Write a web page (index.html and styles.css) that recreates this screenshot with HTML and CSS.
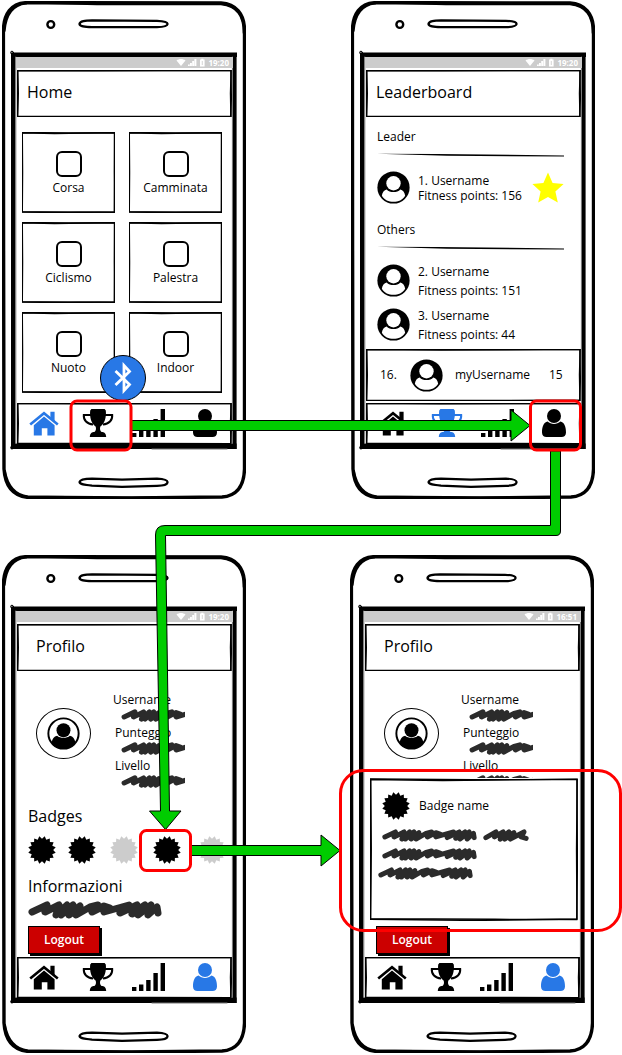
FILE: index.html
```html
<!DOCTYPE html>
<html lang="it">
<head>
<meta charset="utf-8">
<meta name="viewport" content="width=device-width, initial-scale=1">
<title>Fitness app wireflow</title>
<link rel="stylesheet" href="styles.css">
</head>
<body>
<svg class="defs" aria-hidden="true">
  <symbol id="frame" viewBox="0 0 100 100" preserveAspectRatio="none">
    <g fill="none" stroke="#000" stroke-width="1.4">
      <path vector-effect="non-scaling-stroke" d="M.3 .6 L50 1.2 L99.6 1 L99.3 50 L99.5 98.6 L50 99.6 L.3 98.8 L.6 50 Z"/>
      <path vector-effect="non-scaling-stroke" d="M.3 1 L35 1.8 L99.5 .8 L99.7 60 L99.4 99 L60 98.8 L.2 98.4 L.3 40 Z"/>
    </g>
  </symbol>
  <symbol id="phone" viewBox="0 0 244 498">
    <g fill="none" stroke="#000" stroke-linecap="round" stroke-linejoin="round">
      <path fill="#fff" stroke-width="3.4" d="M1.4 30 C1.6 13 9 2 25 1.6 L219 2 C234 3 242.4 13 242.5 29 L242.5 250 L242.5 468 C242 485 235 495 220 496 L130 496.9 L25 496.3 C11 495 3 485 2 468 L1.6 250 Z"/>
      <path stroke-width="2.6" d="M25 1.3 L95 3 L219 3 C236 5 242 15 242 32"/>
      <path stroke-width="2" d="M2.6 30 C4 14 11 4 24 2.6 M3 470 C6 487 14 494 26 495.6 L120 496.8 L200 496"/>
      <circle cx="48.8" cy="23.5" r="3.4" stroke-width="2.4"/>
      <path stroke-width="2.3" d="M77.5 23 C78 20 83 19.6 90 19.4 L155 19.8 C162 20 165.500 21 165.600 23 C165.400 25 162 26 155 26.200 L90 26.200 C82 26 78 25.500 77.500 23 Z"/>
      <path stroke-width="2.2" d="M77.5 481 C78 478.4 83 477.6 90 477.6 L120 478.6 L155 477.600 C162 478 165.400 479 165.600 481 C165.400 484 162 484.600 155 484.800 L120 485.800 L90 484.600 C82 484 78 483.600 77.500 481 Z"/>
      <path stroke-width="4.4" stroke-linecap="butt" stroke-linejoin="miter" d="M9 53.8 H235 M11.2 51.5 V448"/>
      <path stroke-width="4" stroke-linecap="butt" d="M232.600 52 V448"/>
      <path stroke-width="5.4" stroke-linecap="butt" d="M9 445.200 H234.600"/>
      <path stroke="#777" stroke-width="1" d="M13.800 56 V442 M230.400 56 V442 M150 448 H225"/>
      <circle cx="10" cy="51.600" r="1.400" stroke-width="1"/>
      <circle cx="10" cy="446.600" r="1.400" stroke-width="1"/>
    </g>
  </symbol>
  <symbol id="status" viewBox="0 0 30 9">
    <g fill="#fff">
      <path d="M.5 2.6 C3 .6 7 .6 9.5 2.6 L5 8 Z"/>
      <path d="M12 8 V6.5 H13.8 V8 Z M14 8 V5 H15.9 V8 Z M16.2 8 V3 H18.1 V8 Z M18.4 8 V1 H20.4 V8 Z"/>
      <path d="M24 1.6 H25.2 V.8 H27.4 V1.6 H28.6 V8.4 H24 Z"/>
    </g>
    <path d="M26.3 3 V7" stroke="#ccc" stroke-width=".8"/>
  </symbol>
  <symbol id="home" viewBox="0 0 30 28">
    <path d="M1.2 15.6 L15 4.2 L28.8 15.6" fill="none" stroke="currentColor" stroke-width="2.6"/>
    <path fill="currentColor" d="M21.4 2.8 H25.6 V13 L21.4 9.6 Z M15 7.6 L25.600 16.200 V26.400 H18.400 V19.200 H12.800 V26.400 H4.800 V16.200 Z"/>
  </symbol>
  <symbol id="trophy" viewBox="0 0 32 28">
    <path fill="none" stroke="currentColor" stroke-width="2" d="M9 6 H1.8 C1.4 11 5 15.2 11 15.4 M23 6 H30.2 C30.6 11 27 15.2 21 15.4"/>
    <path fill="currentColor" d="M9.4 0 H22.6 L23.8 1.6 C24.6 8 22.6 15 18.4 17.6 C17.6 19.6 18 22 19.600 23 C22 23 24 24 24.200 28 H7.800 C8 24 10 23 12.400 23 C14 22 14.400 19.600 13.600 17.600 C9.400 15 7.400 8 8.200 1.600 Z"/>
  </symbol>
  <symbol id="signal" viewBox="0 0 33 28">
    <path fill="currentColor" d="M0 24 H4.4 V28 H0 Z M7 21.6 H11.4 V28 H7 Z M14.2 17 H18.6 V28 H14.2 Z M21.4 10 H25.8 V28 H21.4 Z M28.6 0 H33 V28 H28.6 Z"/>
  </symbol>
  <symbol id="user" viewBox="0 0 24 28">
    <circle cx="12" cy="7" r="7" fill="currentColor"/>
    <path fill="currentColor" d="M5.6 12.6 C9 15.8 15 15.8 18.4 12.6 C22.4 13.4 24 18 24 23.4 C24 26.6 22 28 19.6 28 H4.4 C2 28 0 26.6 0 23.4 C0 18 1.6 13.4 5.6 12.6 Z"/>
  </symbol>
  <symbol id="avatar" viewBox="-17 -17 34 34">
    <circle r="16.6"/>
    <path fill="#fff" d="M-12 8.4 C-11.600 5 -9.600 2.400 -7 2 C-4 5.600 4 5.600 7 2 C9.600 2.400 11.600 5 12 8.400 C9.400 12.600 5 14.800 0 14.800 C-5 14.800 -9.400 12.600 -12 8.400 Z"/>
    <circle cy="-4.4" r="7.4" fill="#fff"/>
  </symbol>
  <symbol id="avatar-line" viewBox="-17 -17 34 34">
    <circle r="15.6" fill="#fff" stroke="#000" stroke-width="2"/>
    <path d="M-12.2 9 C-11.6 5.4 -9.8 3 -6.6 2.2 C-3.6 5 3.6 5 6.6 2.2 C9.8 3 11.6 5.4 12.2 9 C9 13.6 5 15.6 0 15.6 C-5 15.6 -9 13.6 -12.2 9 Z"/>
    <circle cy="-3.4" r="7.2"/>
  </symbol>
  <symbol id="badge" viewBox="-14 -14 28 28">
    <path fill="currentColor" d="M11.2 0 L13.7 2.7 L10.3 4.3 L11.6 7.8 L7.9 7.9 L7.8 11.6 L4.3 10.3 L2.7 13.7 L0 11.2 L-2.7 13.7 L-4.3 10.3 L-7.8 11.6 L-7.9 7.9 L-11.6 7.8 L-10.3 4.3 L-13.7 2.7 L-11.2 0 L-13.7 -2.7 L-10.3 -4.3 L-11.6 -7.8 L-7.9 -7.9 L-7.8 -11.6 L-4.3 -10.3 L-2.7 -13.7 L0 -11.2 L2.7 -13.7 L4.3 -10.3 L7.8 -11.6 L7.9 -7.9 L11.6 -7.8 L10.3 -4.3 L13.7 -2.7 Z"/>
  </symbol>
  <g id="ink" fill="none" stroke="#2b2b2b" stroke-width="7" stroke-linecap="round" stroke-linejoin="round">
    <path d="M4 11 L19 4 L17 11 L31 4 L28 14 L39 4 L33 14 L45 4 L41 14 L52 5 L48 14 L62 6 L70 4 L64 11 L76 5 L82 7 L76 11 L101 4 L92 12 L109 4 L104 13 L117 4 L110 14 L123 4 L120 14 L129 6 L130 12"/>
  </g>
</svg>

<main class="board">
  <div class="row row-top">
    <section class="phone" aria-label="Home">
      <svg class="shell" aria-hidden="true"><use href="#phone"/></svg>
      <div class="status"><svg aria-hidden="true"><use href="#status"/></svg><time>19:20</time></div>
      <header class="bar"><svg class="frame"><use href="#frame"/></svg><h1>Home</h1></header>
      <div class="content activities">
        <label class="card"><svg class="frame"><use href="#frame"/></svg><input type="checkbox"><span>Corsa</span></label>
        <label class="card"><svg class="frame"><use href="#frame"/></svg><input type="checkbox"><span>Camminata</span></label>
        <label class="card"><svg class="frame"><use href="#frame"/></svg><input type="checkbox"><span>Ciclismo</span></label>
        <label class="card"><svg class="frame"><use href="#frame"/></svg><input type="checkbox"><span>Palestra</span></label>
        <label class="card"><svg class="frame"><use href="#frame"/></svg><input type="checkbox"><span>Nuoto</span></label>
        <label class="card"><svg class="frame"><use href="#frame"/></svg><input type="checkbox"><span>Indoor</span></label>
        <button class="bluetooth" type="button" aria-label="Bluetooth">
          <svg viewBox="0 0 18 32"><path d="M1.500 9 L15.500 22.500 L10 28.500 V3.500 L15.500 9.500 L1.500 23" fill="none" stroke="#fff" stroke-width="2.800"/></svg>
        </button>
      </div>
      <nav class="tabs">
        <svg class="frame"><use href="#frame"/></svg>
        <a class="on" href="#" aria-label="Home"><svg class="i-home"><use href="#home"/></svg></a>
        <a href="#" aria-label="Leaderboard"><svg class="i-trophy"><use href="#trophy"/></svg></a>
        <a href="#" aria-label="Statistiche"><svg class="i-signal"><use href="#signal"/></svg></a>
        <a href="#" aria-label="Profilo"><svg class="i-user"><use href="#user"/></svg></a>
      </nav>
    </section>

    <section class="phone" aria-label="Leaderboard">
      <svg class="shell" aria-hidden="true"><use href="#phone"/></svg>
      <div class="status"><svg aria-hidden="true"><use href="#status"/></svg><time>19:20</time></div>
      <header class="bar"><svg class="frame"><use href="#frame"/></svg><h1>Leaderboard</h1></header>
      <div class="content ranking">
        <div class="ranks">
          <h2>Leader</h2>
          <svg class="rule" viewBox="0 0 187 4" preserveAspectRatio="none"><path d="M0 .8 L60 1 L187 2.400 V3.600 L70 2.800 Z"/></svg>
          <div class="rank first">
            <svg class="avatar"><use href="#avatar"/></svg>
            <p>1. Username<br>Fitness points: 156</p>
            <svg class="star" viewBox="0 0 32 32"><path fill="#ff0" d="M16 .6 L20.6 11 L31.6 12 L23.4 19.4 L25.8 30.6 L16 25 L6.2 30.6 L8.6 19.4 L.4 12 L11.4 11 Z"/></svg>
          </div>
          <h2>Others</h2>
          <svg class="rule" viewBox="0 0 187 4" preserveAspectRatio="none"><path d="M0 .8 L60 1 L187 2.400 V3.600 L70 2.800 Z"/></svg>
          <div class="rank">
            <svg class="avatar"><use href="#avatar"/></svg>
            <p>2. Username<br>Fitness points: 151</p>
          </div>
          <div class="rank">
            <svg class="avatar"><use href="#avatar"/></svg>
            <p>3. Username<br>Fitness points: 44</p>
          </div>
        </div>
        <div class="mine">
          <svg class="frame"><use href="#frame"/></svg>
          <span>16.</span>
          <svg class="avatar"><use href="#avatar"/></svg>
          <span>myUsername</span>
          <span>15</span>
        </div>
      </div>
      <nav class="tabs">
        <svg class="frame"><use href="#frame"/></svg>
        <a href="#" aria-label="Home"><svg class="i-home"><use href="#home"/></svg></a>
        <a class="on" href="#" aria-label="Leaderboard"><svg class="i-trophy"><use href="#trophy"/></svg></a>
        <a href="#" aria-label="Statistiche"><svg class="i-signal"><use href="#signal"/></svg></a>
        <a href="#" aria-label="Profilo"><svg class="i-user"><use href="#user"/></svg></a>
      </nav>
    </section>
  </div>

  <div class="row row-bottom">
    <section class="phone" aria-label="Profilo">
      <svg class="shell" aria-hidden="true"><use href="#phone"/></svg>
      <div class="status"><svg aria-hidden="true"><use href="#status"/></svg><time>19:20</time></div>
      <header class="bar inset"><svg class="frame"><use href="#frame"/></svg><h1>Profilo</h1></header>
      <div class="content profile">
        <div class="identity">
          <div class="portrait"><svg class="avatar"><use href="#avatar-line"/></svg></div>
          <dl>
            <dt>Username</dt><dd><svg viewBox="0 0 88 18"><use href="#ink"/></svg></dd>
            <dt>Punteggio</dt><dd><svg viewBox="0 0 88 18"><use href="#ink"/></svg></dd>
            <dt>Livello</dt><dd><svg viewBox="0 0 88 18"><use href="#ink"/></svg></dd>
          </dl>
        </div>
        <h2>Badges</h2>
        <div class="badges">
          <svg class="badge"><use href="#badge"/></svg>
          <svg class="badge"><use href="#badge"/></svg>
          <svg class="badge off"><use href="#badge"/></svg>
          <svg class="badge"><use href="#badge"/></svg>
          <svg class="badge off"><use href="#badge"/></svg>
        </div>
        <h2>Informazioni</h2>
        <svg class="info" viewBox="0 0 134 18"><use href="#ink"/></svg>
        <button class="logout" type="button">Logout</button>
      </div>
      <nav class="tabs">
        <svg class="frame"><use href="#frame"/></svg>
        <a href="#" aria-label="Home"><svg class="i-home"><use href="#home"/></svg></a>
        <a href="#" aria-label="Leaderboard"><svg class="i-trophy"><use href="#trophy"/></svg></a>
        <a href="#" aria-label="Statistiche"><svg class="i-signal"><use href="#signal"/></svg></a>
        <a class="on" href="#" aria-label="Profilo"><svg class="i-user"><use href="#user"/></svg></a>
      </nav>
    </section>

    <section class="phone" aria-label="Profilo, dettaglio badge">
      <svg class="shell" aria-hidden="true"><use href="#phone"/></svg>
      <div class="status"><svg aria-hidden="true"><use href="#status"/></svg><time>16:51</time></div>
      <header class="bar inset"><svg class="frame"><use href="#frame"/></svg><h1>Profilo</h1></header>
      <div class="content profile">
        <div class="identity">
          <div class="portrait"><svg class="avatar"><use href="#avatar-line"/></svg></div>
          <dl>
            <dt>Username</dt><dd><svg viewBox="0 0 88 18"><use href="#ink"/></svg></dd>
            <dt>Punteggio</dt><dd><svg viewBox="0 0 88 18"><use href="#ink"/></svg></dd>
            <dt>Livello</dt><dd><svg viewBox="0 0 88 18"><use href="#ink"/></svg></dd>
          </dl>
        </div>
        <div class="dialog" role="dialog" aria-labelledby="badge-name">
          <svg class="frame"><use href="#frame"/></svg>
          <div class="dialog-head"><svg class="badge"><use href="#badge"/></svg><h2 id="badge-name">Badge name</h2></div>
          <div class="line">
            <svg class="long" viewBox="0 0 134 18"><use href="#ink"/></svg>
            <svg class="short" viewBox="0 0 64 18"><path fill="none" stroke="#2b2b2b" stroke-width="7" stroke-linecap="round" stroke-linejoin="round" d="M4 12 L18 4 L16 11 L28 4 L24 14 L36 4 L30 14 L43 5 L38 14 L57 4 L53 11 L60 13"/></svg>
          </div>
          <div class="line"><svg class="long" viewBox="0 0 134 18"><use href="#ink"/></svg></div>
          <div class="line outdent"><svg class="long" viewBox="0 0 134 18"><use href="#ink"/></svg></div>
        </div>
        <button class="logout" type="button">Logout</button>
      </div>
      <nav class="tabs">
        <svg class="frame"><use href="#frame"/></svg>
        <a href="#" aria-label="Home"><svg class="i-home"><use href="#home"/></svg></a>
        <a href="#" aria-label="Leaderboard"><svg class="i-trophy"><use href="#trophy"/></svg></a>
        <a href="#" aria-label="Statistiche"><svg class="i-signal"><use href="#signal"/></svg></a>
        <a class="on" href="#" aria-label="Profilo"><svg class="i-user"><use href="#user"/></svg></a>
      </nav>
    </section>
  </div>

  <svg class="flow" viewBox="0 0 622 1055" aria-hidden="true">
    <g fill="#0c0" stroke="#000" stroke-width="1">
      <path d="M131.5 420.5 H511 V410 L530 425.5 L511 441 V430.5 H131.5 Z"/>
      <path d="M550.5 451 H560.5 V531 Q560.5 535.5 556 535.5 H165.5 L169.5 811 H181 L165.5 829.5 L149.5 811 H160.5 L155.5 535 Q155.5 525.5 165 525.5 H550.5 Z"/>
      <path d="M191.5 845.5 H321 V835 L340 850.5 L321 866 V855.5 H191.5 Z"/>
    </g>
    <g fill="none" stroke="#f00" stroke-width="3">
      <rect x="71" y="401" width="60" height="49" rx="6"/>
      <rect x="530.5" y="401" width="50" height="49" rx="6"/>
      <rect x="140.5" y="830.5" width="50" height="40" rx="6"/>
      <rect x="340.5" y="770.5" width="280" height="160" rx="23"/>
    </g>
  </svg>
</main>
</body>
</html>
```
FILE: styles.css
```css
* { box-sizing: border-box; }

body {
  margin: 0;
  background: #fff;
  color: #000;
  font: 12px/16px "Open Sans", "Noto Sans", sans-serif;
}

h1, h2, p, dl, dd { margin: 0; font-weight: 400; }
svg { display: block; }
.defs { position: absolute; width: 0; height: 0; }

/* Canvas with the four screens */
.board {
  position: relative;
  display: flex;
  flex-direction: column;
  gap: 56px;
  width: max-content;
  padding: 1px 0 2px 2px;
}
.row { display: flex; }
.row-top { gap: 105px; }
.row-bottom { gap: 104px; }
.flow {
  position: absolute;
  top: 0;
  left: 0;
  width: 622px;
  height: 1055px;
  pointer-events: none;
}

/* Phone */
.phone {
  position: relative;
  display: flex;
  flex-direction: column;
  width: 244px;
  min-height: 498px;
  padding: 56px 13px 55px 14px;
}
.shell {
  position: absolute;
  inset: 0;
  width: 100%;
  height: 100%;
  overflow: visible;
}
.status {
  position: relative;
  display: flex;
  align-items: center;
  justify-content: flex-end;
  gap: 2px;
  height: 11px;
  padding-right: 4px;
  background: #ccc;
  color: #fff;
  font-size: 8px;
  font-weight: 700;
  line-height: 11px;
}
.status svg { width: 30px; height: 9px; }
.frame { position: absolute; inset: 0; width: 100%; height: 100%; }
.bar {
  position: relative;
  display: flex;
  align-items: center;
  height: 47px;
  margin: 2px 1px 0;
  padding: 0 10px 4px;
}
.bar.inset { padding-left: 19px; }
.bar h1 { font-size: 16px; line-height: 20px; }
.content { position: relative; flex: 1; }

/* Bottom tabs */
.tabs {
  position: relative;
  display: grid;
  grid-template-columns: repeat(4, 1fr);
  height: 41px;
  margin: 0 1px;
  background: #fff;
}
.tabs a {
  position: relative;
  display: flex;
  align-items: center;
  justify-content: center;
  padding-bottom: 2px;
  color: #000;
}
.tabs a:nth-of-type(3) { padding-right: 5px; }
.tabs a.on { color: #2878e6; }
.i-home { width: 30px; height: 28px; }
.i-trophy { width: 32px; height: 28px; }
.i-signal { width: 33px; height: 28px; }
.i-user { width: 24px; height: 28px; }

/* Home */
.activities {
  display: grid;
  grid-template-columns: 1fr 1fr;
  grid-auto-rows: 81px;
  gap: 9px 14px;
  align-content: start;
  padding: 15px 11px 0 6px;
}
.card {
  position: relative;
  display: flex;
  flex-direction: column;
  align-items: center;
  gap: 3px;
  padding-top: 19px;
}
.card input {
  position: relative;
  appearance: none;
  width: 26px;
  height: 26px;
  margin: 0;
  border: 2px solid #000;
  border-radius: 6px;
}
.card span { position: relative; }
.bluetooth {
  position: absolute;
  right: 87px;
  bottom: 2px;
  display: grid;
  place-items: center;
  width: 46px;
  height: 46px;
  padding: 0;
  border: 1px solid #000;
  border-radius: 50%;
  background: #2878e6;
}
.bluetooth svg { width: 18px; height: 32px; }

/* Leaderboard */
.ranking { display: flex; flex-direction: column; padding-bottom: 2px; }
.ranks { padding: 11px 18px 0 12px; }
.ranks h2 { font-size: 12px; line-height: 17px; }
.rule { width: 100%; height: 4px; margin-top: 8px; }
.rank {
  display: flex;
  align-items: center;
  gap: 8px;
  height: 33px;
  margin-top: 11px;
  line-height: 19px;
}
.rule + .rank { margin-top: 14px; }
.rank.first { margin-bottom: 17px; line-height: 15px; }
.avatar { flex: none; width: 33px; height: 33px; }
.star { width: 32px; height: 32px; margin-left: auto; }
.mine {
  position: relative;
  display: grid;
  grid-template-columns: 30px 45px 1fr 32px;
  align-items: center;
  height: 52px;
  margin: auto 1px 0;
  padding-left: 14px;
  background: #fff;
}

/* Profile */
.profile { padding: 20px 0 0 12px; }
.identity { display: flex; gap: 22px; padding-left: 8px; }
.portrait {
  display: grid;
  place-items: center;
  width: 55px;
  height: 51px;
  margin-top: 17px;
  border: 1px solid #000;
  border-radius: 50%;
}
.identity dt { line-height: 17px; padding-left: 2px; }
.identity dt:first-child { padding-left: 0; }
.identity dd { padding: 1px 0 2px 8px; }
.identity dd svg { width: 64px; height: 13px; }
.profile > h2 { font-size: 16px; line-height: 20px; }
.identity + h2 { margin-top: 16px; }
.badges {
  display: grid;
  grid-template-columns: 40px 42px 43px 45px 28px;
  margin: 10px 0 12px;
}
.badge { width: 28px; height: 28px; color: #000; }
.badge.off { color: #ccc; }
.info { width: 134px; height: 18px; margin-top: 5px; }
.logout {
  position: absolute;
  left: 12px;
  bottom: 3px;
  width: 72px;
  height: 28px;
  padding: 0;
  border: 1px solid #000;
  background: #c00;
  box-shadow: 2px 2px 0 #000;
  color: #fff;
  font: 600 12px/16px "Open Sans", "Noto Sans", sans-serif;
}

/* Badge dialog */
.dialog {
  position: absolute;
  top: 107px;
  left: 6px;
  width: 208px;
  height: 143px;
  padding: 14px 12px;
  background: #fff;
}
.dialog-head { display: flex; align-items: center; gap: 9px; margin-bottom: 9px; }
.dialog-head h2 { font-size: 12px; line-height: 16px; }
.line { display: flex; gap: 6px; height: 13px; margin-bottom: 6px; }
.line.outdent { margin-left: -4px; }
.long { width: 95px; height: 13px; }
.short { width: 46px; height: 13px; }
```
